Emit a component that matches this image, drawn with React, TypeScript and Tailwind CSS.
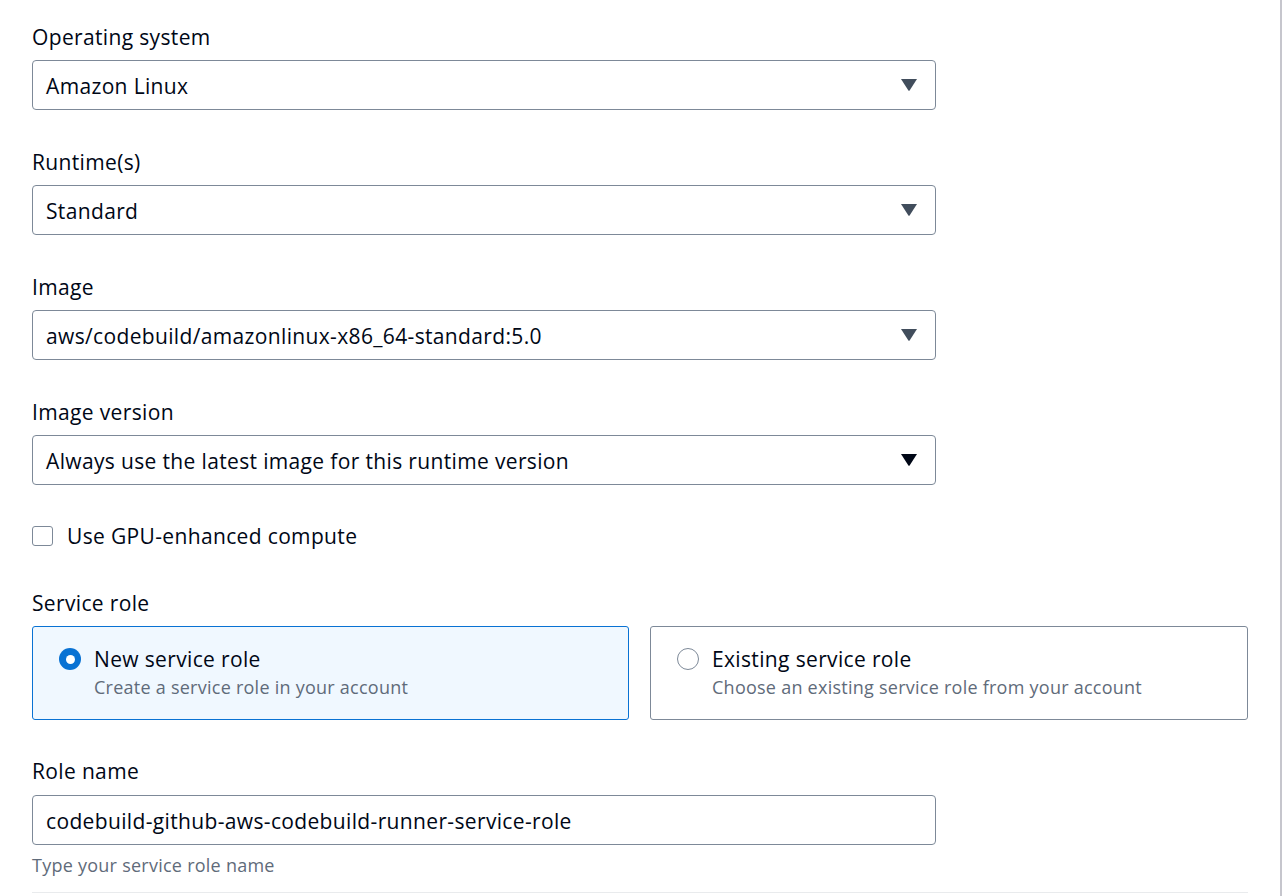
import React from "react";

function Caret({ dark }: { dark?: boolean }) {
  return (
    <svg width="18" height="14" viewBox="0 0 18 14" className="shrink-0">
      <path d="M1 1 L17 1 L9.6 12.4 Q9 13.2 8.4 12.4 Z" fill={dark ? "#000716" : "#414d5c"} />
    </svg>
  );
}

function Label({ children }: { children: React.ReactNode }) {
  return <div className="text-[21px] leading-[28px] tracking-[0.35px] text-[#000716]">{children}</div>;
}

function Select({ value, dark }: { value: string; dark?: boolean }) {
  return (
    <div className="mt-[9px] flex h-[50px] w-[904px] items-center justify-between rounded-[4px] border border-[#7d8998] bg-white pl-[13px] pr-[17px]">
      <span className="pt-[2px] text-[21px] leading-[28px] tracking-[0.35px] text-[#000716]">{value}</span>
      <Caret dark={dark} />
    </div>
  );
}

function Field({ label, value, dark }: { label: string; value: string; dark?: boolean }) {
  return (
    <div className="flex flex-col">
      <Label>{label}</Label>
      <Select value={value} dark={dark} />
    </div>
  );
}

export default function App() {
  return (
    <div
      className="flex h-[896px] w-[1282px] bg-white"
      style={{ fontFamily: '"Open Sans", "Noto Sans", Arial, sans-serif' }}
    >
      <div className="flex w-[1280px] flex-col pl-[32px] pt-[23px]">
        <div className="flex flex-col gap-[38px]">
          <Field label="Operating system" value="Amazon Linux" />
          <Field label="Runtime(s)" value="Standard" />
          <Field label="Image" value="aws/codebuild/amazonlinux-x86_64-standard:5.0" />
          <Field label="Image version" value="Always use the latest image for this runtime version" dark />
        </div>

        <div className="mt-[37px] flex h-[28px] items-center">
          <div className="h-[20px] w-[21px] rounded-[3px] border-[1.5px] border-[#7d8998] bg-white" />
          <span className="ml-[14px] text-[21px] leading-[28px] tracking-[0.35px] text-[#000716]">Use GPU-enhanced compute</span>
        </div>

        <div className="mt-[39px]">
          <Label>Service role</Label>
        </div>
        <div className="mt-[9px] flex w-[1216px] gap-[21px]">
          <div className="flex h-[94px] w-[597px] items-start rounded-[3px] border border-[#0972d3] bg-[#f0f8ff] pl-[26px] pt-[18px]">
            <div className="mt-[3px] flex h-[22px] w-[22px] items-center justify-center rounded-full bg-[#0972d3]">
              <div className="h-[9px] w-[9px] rounded-full bg-white" />
            </div>
            <div className="ml-[13px] flex flex-col">
              <span className="text-[21px] leading-[28px] tracking-[0.35px] text-[#000716]">New service role</span>
              <span className="mt-[2px] text-[18px] leading-[24px] tracking-[0.25px] text-[#5f6b7a]">Create a service role in your account</span>
            </div>
          </div>
          <div className="flex h-[94px] w-[598px] items-start rounded-[3px] border border-[#7d8998] bg-white pl-[26px] pt-[18px]">
            <div className="mt-[3px] h-[22px] w-[22px] rounded-full border-[1.5px] border-[#7d8998] bg-white" />
            <div className="ml-[13px] flex flex-col">
              <span className="text-[21px] leading-[28px] tracking-[0.35px] text-[#000716]">Existing service role</span>
              <span className="mt-[2px] text-[18px] leading-[24px] tracking-[0.25px] text-[#5f6b7a]">Choose an existing service role from your account</span>
            </div>
          </div>
        </div>

        <div className="mt-[37px] flex flex-col">
          <Label>Role name</Label>
          <div className="mt-[10px] flex h-[50px] w-[904px] items-center rounded-[4px] border border-[#7d8998] bg-white pl-[13px]">
            <span className="pt-[2px] text-[21px] leading-[28px] tracking-[0.35px] text-[#000716]">codebuild-github-aws-codebuild-runner-service-role</span>
          </div>
          <div className="mt-[8px] text-[18px] leading-[24px] tracking-[0.25px] text-[#5f6b7a]">Type your service role name</div>
        </div>
        <div className="mt-[15px] h-px w-[1216px] bg-[#e9ebed]" />
      </div>
      <div className="h-full w-[2px] bg-[#c6c6cd]" />
    </div>
  );
}
